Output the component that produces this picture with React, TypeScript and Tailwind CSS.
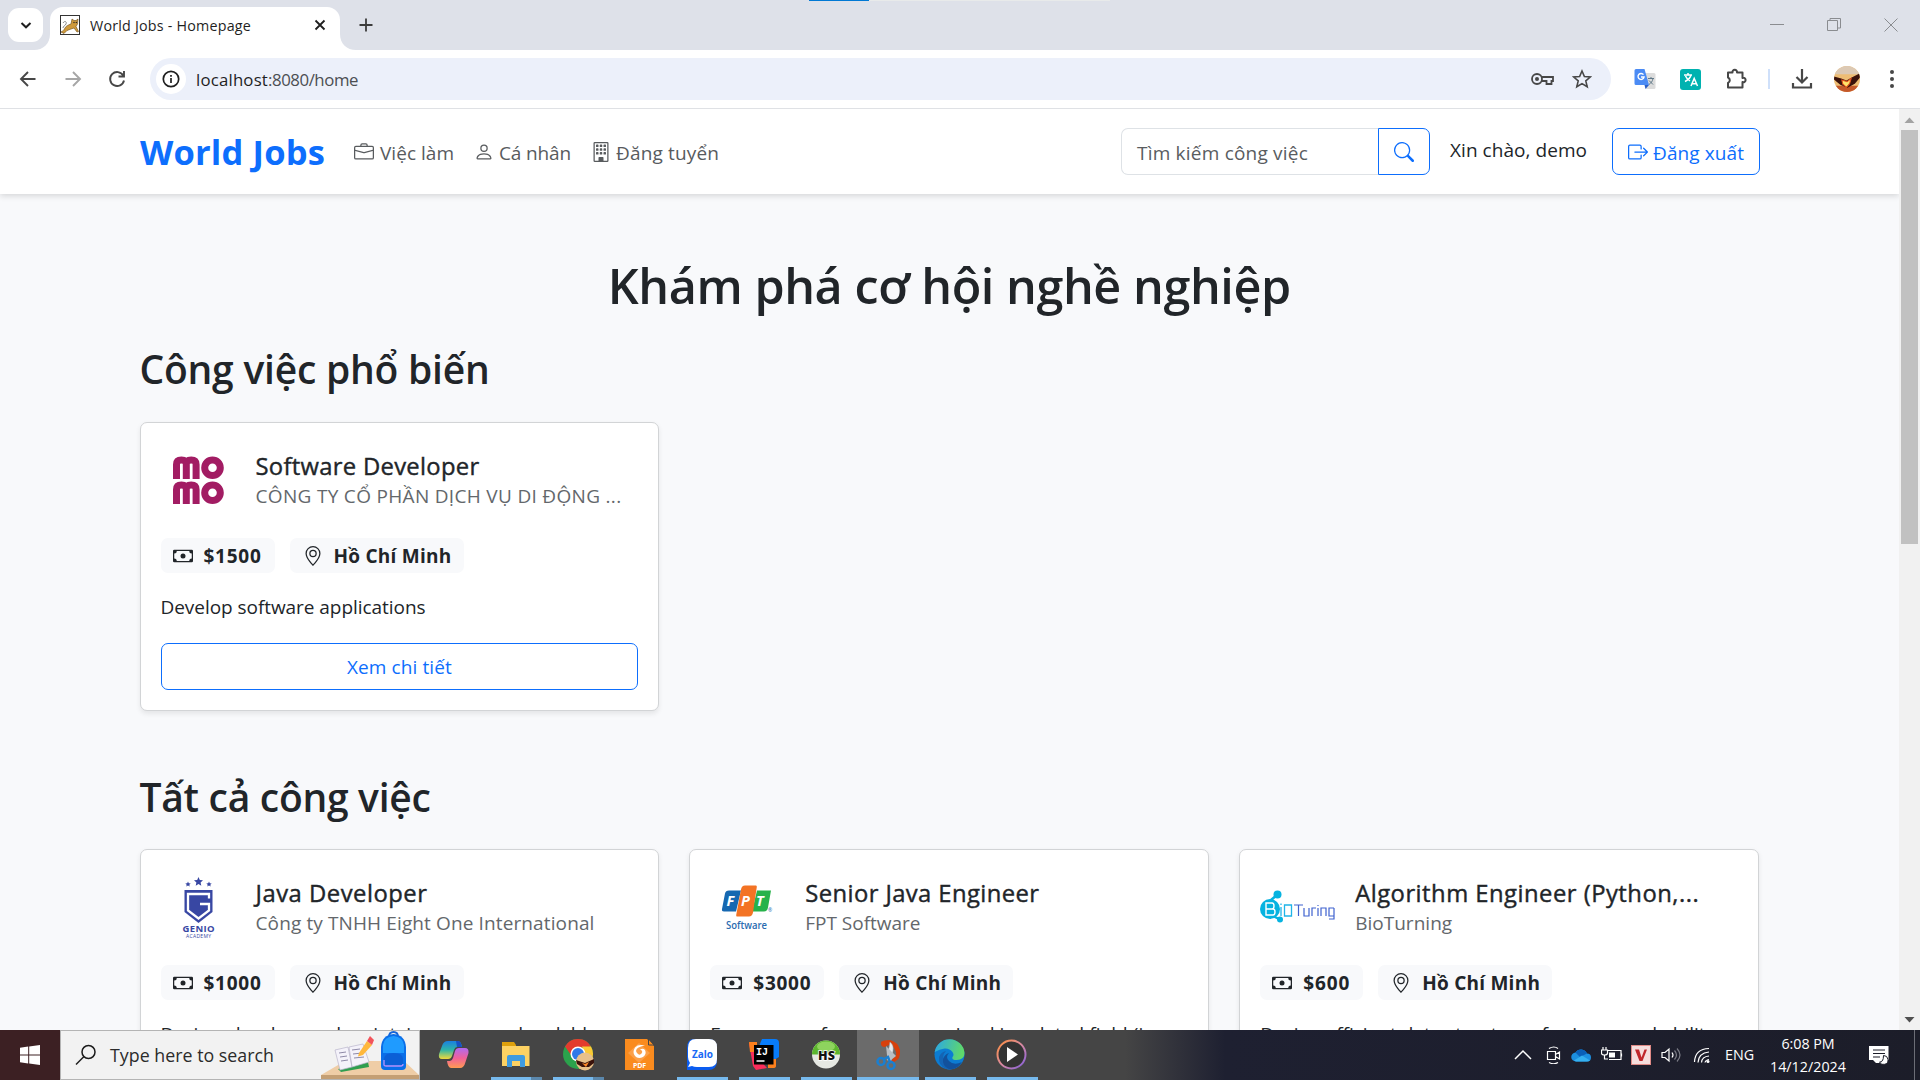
import { useLayoutEffect, useRef } from "react";
import type { ReactNode } from "react";
import { BsBriefcase, BsPerson, BsBuilding, BsSearch, BsBoxArrowRight, BsCash, BsGeoAlt } from "react-icons/bs";

/* Single line of text whose tracking is adjusted so that it spans `w` pixels. */
function Line({ w, className = "", children }: { w: number; className?: string; children: string }) {
  const ref = useRef<HTMLSpanElement>(null);
  useLayoutEffect(() => {
    const el = ref.current;
    if (!el) return;
    el.style.letterSpacing = "0px";
    const natural = el.getBoundingClientRect().width;
    el.style.letterSpacing = `${(w - natural) / children.length}px`;
  }, [w, children]);
  return (
    <span ref={ref} className={`inline-block whitespace-nowrap ${className}`}>
      {children}
    </span>
  );
}

function Svg({ size = 20, box = 20, children, className = "" }: { size?: number; box?: number; children: ReactNode; className?: string }) {
  return (
    <svg width={size} height={size} viewBox={`0 0 ${box} ${box}`} fill="none" className={`shrink-0 ${className}`}>
      {children}
    </svg>
  );
}

function Favicon() {
  return (
    <Svg size={20} className="text-[#333]">
      <rect x=".5" y=".5" width="19" height="19" fill="#fff" stroke="#333" />
      <path d="M1 17c2-1 3-2 4-4 1-2 3-3 6-4l1-5 2 1.500h2L18 4l-.5 5-1.500 2.500 2.500 5-1.500.5-3-4-3 1-4 1.500-3 3z" fill="#cf9a3c" stroke="#6b4a15" strokeWidth=".6" />
      <path d="M3 8c2-3 4-1 3 1s-3 2-3 4" stroke="#888" />
      <circle cx="14" cy="7.500" r=".7" fill="#222" />
      <circle cx="16.300" cy="7.500" r=".7" fill="#222" />
    </Svg>
  );
}

function TabStrip() {
  return (
    <div className="relative flex h-[50px] shrink-0 bg-[#dee1e9]">
      <div className="absolute left-[809px] top-0 h-px w-[60px] bg-[#0078d4]" />
      <div className="absolute left-[869px] top-0 h-px w-[241px] bg-[#e8eaea]" />
      <div className="ml-2 mt-2 flex h-[34px] w-[35px] items-center justify-center rounded-[11px] bg-white">
        <Svg size={12} box={12}>
          <path d="M1.500 4 6 8.300 10.500 4" stroke="#1f1f1f" strokeWidth="2" />
        </Svg>
      </div>
      <div className="w-[7px] self-end h-4 overflow-visible">
        <Svg size={16} box={16} className="-ml-[9px] max-w-none">
          <path d="M16 0v16H0C9 16 16 10 16 0z" fill="#fff" />
        </Svg>
      </div>
      <div className="mt-[7px] flex h-[43px] w-[290px] items-center rounded-t-[13px] bg-white pb-[7px] pl-[10px] pr-[13px]">
        <Favicon />
        <Line w={161} className="ml-[10px] mt-px text-[14.300px] leading-5 text-[#1f1f1f]">World Jobs - Homepage</Line>
        <Svg size={14} box={14} className="ml-auto">
          <path d="m2.500 2.500 9 9m0-9-9 9" stroke="#1f1f1f" strokeWidth="1.800" />
        </Svg>
      </div>
      <div className="flex h-4 w-[16px] self-end">
        <Svg size={16} box={16}>
          <path d="M0 0v16h16C7 16 0 10 0 0z" fill="#fff" />
        </Svg>
      </div>
      <Svg size={14} box={14} className="ml-[3px] mt-[18px]">
        <path d="M7 .5v13M.5 7h13" stroke="#3c3c3c" strokeWidth="1.800" />
      </Svg>
      <div className="ml-auto mr-[22px] flex h-[50px] items-center gap-[43px] text-[#8a8c90]">
        <Svg size={14} box={14}>
          <path d="M0 6.500h14" stroke="currentColor" />
        </Svg>
        <Svg size={14} box={14}>
          <path d="M.5 2.500h10v10H.5zM3 2V.5h10.500V10H11" stroke="currentColor" />
        </Svg>
        <Svg size={14} box={14}>
          <path d="m.5.5 13 13m0-13-13 13" stroke="currentColor" />
        </Svg>
      </div>
    </div>
  );
}

function Toolbar() {
  return (
    <div className="flex h-[59px] shrink-0 items-center border-b border-[#dfe1e5] bg-white text-[#474747]">
      <Svg size={20} className="ml-[18px]">
        <path d="M17.500 10H3.500m6.500-7-7 7 7 7" stroke="currentColor" strokeWidth="1.900" />
      </Svg>
      <Svg size={20} className="ml-[25px] text-[#a6a6a6]">
        <path d="M2.500 10h14M10 3l7 7-7 7" stroke="currentColor" strokeWidth="1.900" />
      </Svg>
      <Svg size={20} className="ml-[24px]">
        <path d="M16.200 6.500A7 7 0 1 0 17 11.500M17 2v5.500h-5.500" stroke="currentColor" strokeWidth="1.900" />
      </Svg>
      <div className="ml-[23px] flex h-[42px] w-[1461px] items-center rounded-full bg-[#ecf0fa] pl-[6px] pr-[19px]">
        <div className="flex size-[30px] items-center justify-center rounded-full bg-white">
          <Svg size={18} box={18}>
            <circle cx="9" cy="9" r="7.700" stroke="#1f1f1f" strokeWidth="1.700" />
            <path d="M9 8v5M9 5v1.800" stroke="#1f1f1f" strokeWidth="1.700" />
          </Svg>
        </div>
        <div className="ml-[10px] flex pt-[2px] text-[16.800px] leading-6">
          <Line w={72} className="text-[#1f1f1f]">localhost</Line>
          <Line w={90} className="text-[#4b4e52]">:8080/home</Line>
        </div>
        <Svg size={24} box={24} className="ml-auto">
          <circle cx="7" cy="12" r="5" stroke="currentColor" strokeWidth="1.800" />
          <circle cx="7" cy="12" r="2" fill="currentColor" />
          <path d="M11.500 10H23v4h-1.500v3h-5v-3h-5" stroke="currentColor" strokeWidth="1.800" />
        </Svg>
        <Svg size={20} className="ml-[18px]">
          <path d="m10 2 2.400 5.500 5.900.5-4.500 3.900 1.400 5.900-5.200-3.200-5.200 3.200 1.400-5.900L1.700 8l5.900-.5z" stroke="currentColor" strokeWidth="1.600" />
        </Svg>
      </div>
      <Svg size={22} box={22} className="ml-[23px]">
        <path d="M8 5h12a1.500 1.500 0 0 1 1.500 1.500v13A1.500 1.500 0 0 1 20 21h-8z" fill="#dcdcdc" />
        <path d="M14 10.500h6M17 9v1.500m2 0c-.5 3-2 4.500-4 6m0-4 4 4" stroke="#607988" />
        <path d="M2 1h8.500l4.500 16H2A1.500 1.500 0 0 1 .5 15.500v-13A1.500 1.500 0 0 1 2 1z" fill="#4b8bf4" />
        <path d="m11.500 21 3.500-4h-4.500z" fill="#2b5fc7" />
        <path d="M9.500 6.700A3 3 0 1 0 10 9H7" stroke="#fff" strokeWidth="1.400" />
      </Svg>
      <div className="ml-[24px] size-[21px] rounded-[3px] bg-[#00b2b0]">
        <Svg size={21} box={21}>
          <path d="M4 6h8M8 4v2m3 0c-.7 3-3 5-6 6.500M5.500 7c1 2.500 3 4 4.500 5M11 17l3.200-7.500L17.500 17M12 14.700h4.500" stroke="#fff" strokeWidth="1.500" />
        </Svg>
      </div>
      <Svg size={24} box={24} className="ml-[23px]">
        <path d="M4 5.500h4.500a2.300 2.300 0 1 1 4.500 0h5.500V11a2.200 2.200 0 1 1 0 4v5.500H4V16a3 3 0 0 0 0-5.500z" stroke="currentColor" strokeWidth="2" strokeLinejoin="round" />
      </Svg>
      <div className="ml-[20px] h-5 w-[2px] bg-[#cfe0fa]" />
      <Svg size={22} box={22} className="ml-[21px]">
        <path d="M11 1v13M5.500 9l5.500 5.500L16.500 9M2 15v4.500h18V15" stroke="currentColor" strokeWidth="2.200" />
      </Svg>
      <div className="ml-[21px] size-[26px] overflow-hidden rounded-full">
        <Svg size={26} box={25}>
          <path d="M0 0h25v25H0z" fill="#eebd74" />
          <path d="M0 0h25v8H0z" fill="#dcc9b4" />
          <path d="M0 19h25v6H0z" fill="#c4582a" />
          <path d="m0 10 7 2 5 2 5-3 8-4v4l-5 6-7 4-7-3-6-5z" fill="#3a120b" />
          <path d="m7.500 13.500 5 1.500 4-3-1.500 5-3 3.500-3.500-3z" fill="#ffe36b" stroke="#e2521d" />
        </Svg>
      </div>
      <Svg size={20} className="ml-[22px]">
        <circle cx="10" cy="3" r="2" fill="currentColor" />
        <circle cx="10" cy="10" r="2" fill="currentColor" />
        <circle cx="10" cy="17" r="2" fill="currentColor" />
      </Svg>
    </div>
  );
}

function NavBar() {
  return (
    <header className="z-10 flex h-[85px] shrink-0 items-center bg-white pl-[140px] pr-[139px] shadow-[0_2px_6px_rgba(0,0,0,0.14)]">
      <Line w={185} className="text-[34.500px] font-bold leading-[52px] text-[#0d6efd]">World Jobs</Line>
      <nav className="ml-[29px] flex items-center text-[19px] leading-[30px] text-[#585b5e]">
        <BsBriefcase size={20} />
        <Line w={74} className="ml-[6px] mt-[3px]">Việc làm</Line>
        <BsPerson size={20} className="ml-[20px]" />
        <Line w={72} className="ml-[5px] mt-[3px]">Cá nhân</Line>
        <BsBuilding size={20} className="ml-[20px]" />
        <Line w={103} className="ml-[5px] mt-[3px]">Đăng tuyển</Line>
      </nav>
      <div className="ml-auto flex h-[47px] text-[19px] leading-[30px]">
        <div className="flex w-[257px] items-center rounded-l-[7px] border border-r-0 border-[#dee2e6] pl-[15px] pt-[2px] text-[#595c5f]">
          <Line w={171}>Tìm kiếm công việc</Line>
        </div>
        <div className="flex w-[52px] items-center justify-center rounded-r-[7px] border border-[#0d6efd] text-[#0d6efd]">
          <BsSearch size={20} />
        </div>
        <Line w={137} className="ml-5 mt-[7px] text-[#212529]">Xin chào, demo</Line>
        <div className="ml-[25px] flex w-[148px] items-center rounded-[7px] border border-[#0d6efd] pl-[15px] text-[#0d6efd]">
          <BsBoxArrowRight size={20} />
          <Line w={91} className="ml-[5px] mt-[2px]">Đăng xuất</Line>
        </div>
      </div>
    </header>
  );
}

function MomoLogo() {
  return (
    <Svg size={75} box={75}>
      {[0, 25].map((y) => (
        <g key={y} transform={`translate(0 ${y})`} stroke="#a21c63" strokeWidth="7">
          <path d="M15.500 36V21.500q0-4.500 4.900-4.500t4.900 4.500V36M25.300 21.500q0-4.500 4.900-4.500t4.900 4.500V36" />
          <circle cx="51.500" cy="24.700" r="7.800" />
        </g>
      ))}
    </Svg>
  );
}

function GenioLogo() {
  return (
    <Svg size={75} box={75}>
      <g transform="translate(0 -6)">
        <path d="m37.500 13 1.300 3 3.200.3-2.400 2.200.7 3.300-2.800-1.700-2.800 1.700.7-3.300-2.400-2.200 3.200-.3zM27 17.500l.8 1.700 1.900.2-1.400 1.300.4 1.900-1.700-1-1.700 1 .4-1.900-1.400-1.300 1.900-.2zM48 17.500l.8 1.700 1.900.2-1.400 1.300.4 1.900-1.700-1-1.700 1 .4-1.900-1.400-1.300 1.900-.2z" fill="#3847a3" />
        <path d="M23.500 26h28v22L37.500 59 23.500 48z" fill="#3847a3" />
        <path d="M48 34.500V30H27V46.500l10.500 8L48 46.500V40H39" stroke="#fff" strokeWidth="2.300" />
        <text x="21.500" y="67.500" textLength="32" fontFamily="Open Sans" fontWeight="700" fontSize="9.500" fill="#3847a3">GENIO</text>
        <text x="25" y="74" textLength="25" fontFamily="Open Sans" fontSize="5" fill="#3847a3">ACADEMY</text>
      </g>
    </Svg>
  );
}

function FptLogo() {
  return (
    <Svg size={75} box={75}>
      <g transform="translate(0 -3.500)">
        <path d="M19 24h12l-5 21H14q-2.500 0-2-2.500L15 27q.6-3 4-3z" fill="#1668b1" />
        <path d="M47 24h14l-3 17q-.7 4-4 4H42z" fill="#27b24a" />
        <path d="M35 19h11q1 0 .8 1.500L43 46q-.8 4-4 4H27q-1 0-.8-1.500L31 23q.7-4 4-4z" fill="#f37324" />
        <g fontFamily="Open Sans" fontWeight="700" fontStyle="italic" fontSize="14.500" fill="#fff">
          <text x="16.500" y="39.500">F</text>
          <text x="31" y="39.500">P</text>
          <text x="46" y="39.500">T</text>
        </g>
        <text x="58" y="45" fontFamily="Open Sans" fontSize="5" fill="#1668b1">®</text>
        <text x="16" y="62" textLength="41" lengthAdjust="spacingAndGlyphs" fontFamily="Open Sans" fontWeight="600" fontSize="10" fill="#2a6cb0">Software</text>
      </g>
    </Svg>
  );
}

function BioLogo() {
  return (
    <Svg size={75} box={75}>
      <path d="m11 30 6-5M11 45l8 4" stroke="#06b3e0" strokeWidth="2.500" />
      <circle cx="10" cy="39" r="10" fill="#06b3e0" />
      <circle cx="17.500" cy="24.500" r="4" fill="#06b3e0" />
      <circle cx="20" cy="49.500" r="3" fill="#06b3e0" />
      <path d="M6 33h6q2 0 2 3t-2 3H6zM6 39h7q2 0 2 3t-2 3H6z" stroke="#fff" strokeWidth="1.400" />
      <g transform="translate(0 1)">
        <path d="M21 36v9M21 32.500v1.500M24.500 34h7v11h-7z" stroke="#1fb4e8" strokeWidth="1.300" />
        <path d="M34 34h9m-4.500 0v11M44 37v8h5v-8m3 8v-8h4m2 0v8m0-11v1M61 45v-8h5v8m8-8h-5v8h5m0-8v11h-5" stroke="#3f62cf" strokeWidth="1.200" />
      </g>
    </Svg>
  );
}

type Job = {
  title: string;
  titleW: number;
  company: string;
  companyW: number;
  salary: string;
  salaryW: number;
  description: string;
  descriptionW: number;
  logo: ReactNode;
};

const popular: Job = {
  title: "Software Developer",
  titleW: 224,
  company: "CÔNG TY CỔ PHẦN DỊCH VỤ DI ĐỘNG ...",
  companyW: 366,
  salary: "$1500",
  salaryW: 58,
  description: "Develop software applications",
  descriptionW: 265,
  logo: <MomoLogo />,
};

const jobs: Job[] = [
  {
    title: "Java Developer",
    titleW: 172,
    company: "Công ty TNHH Eight One International",
    companyW: 339,
    salary: "$1000",
    salaryW: 58,
    description: "Design, develop, and maintain secure and scalable ...",
    descriptionW: 456,
    logo: <GenioLogo />,
  },
  {
    title: "Senior Java Engineer",
    titleW: 234,
    company: "FPT Software",
    companyW: 115,
    salary: "$3000",
    salaryW: 58,
    description: "Four years of experience gained in related field (i...",
    descriptionW: 448,
    logo: <FptLogo />,
  },
  {
    title: "Algorithm Engineer (Python,...",
    titleW: 344,
    company: "BioTurning",
    companyW: 97,
    salary: "$600",
    salaryW: 47,
    description: "Design efficient data structures for improved ability...",
    descriptionW: 470,
    logo: <BioLogo />,
  },
];

function JobCard({ job }: { job: Job }) {
  return (
    <article className="flex flex-col rounded-[7px] border border-[#d2d4d6] bg-white p-5 text-[19px] leading-[30px] text-[#212529] shadow-[0_2.5px_5px_rgba(0,0,0,0.08)]">
      <div className="flex h-[75px] items-center">
        {job.logo}
        <div className="ml-5 flex flex-col items-start pt-px">
          <Line w={job.titleW} className="text-[23.800px] [-webkit-text-stroke:0.4px]">{job.title}</Line>
          <Line w={job.companyW} className="text-[#63676b]">{job.company}</Line>
        </div>
      </div>
      <div className="mt-5 flex h-[35px] gap-[15px] font-bold">
        <div className="flex items-center rounded-[7px] bg-[#f8f9fb] pl-3 pr-[13px]">
          <BsCash size={20} className="mr-[11px]" />
          <Line w={job.salaryW}>{job.salary}</Line>
        </div>
        <div className="flex items-center rounded-[7px] bg-[#f8f9fb] pl-[13px] pr-3">
          <BsGeoAlt size={20} className="mr-[11px]" />
          <Line w={118}>Hồ Chí Minh</Line>
        </div>
      </div>
      <div className="mt-[19px]">
        <Line w={job.descriptionW}>{job.description}</Line>
      </div>
      <div className="mt-[21px] flex h-[47px] items-center justify-center rounded-[7px] border border-[#0d6efd] text-[#0d6efd]">
        <Line w={105}>Xem chi tiết</Line>
      </div>
    </article>
  );
}

function Scrollbar() {
  return (
    <div className="flex w-[21px] shrink-0 flex-col items-center bg-[#f1f1f1]">
      <Svg size={21} box={21}>
        <path d="m10.500 8.500 5 5.500h-10z" fill="#a3a3a3" />
      </Svg>
      <div className="h-[414px] w-[17px] bg-[#c1c1c1]" />
      <Svg size={21} box={21} className="mt-auto">
        <path d="M5.500 8h10l-5 5.500z" fill="#505050" />
      </Svg>
    </div>
  );
}

function SearchArt() {
  return (
    <svg width="98" height="48" viewBox="0 0 98 48" className="shrink-0 self-end">
      <path d="M0 44 24 30h59l15 14z" fill="#efcda6" />
      <path d="M0 44h98v4H0z" fill="#c49f74" />
      <path d="m17 38 3 3 28-5-1-5z" fill="#2f9e4f" />
      <path d="m14 19 13-3 4 20-12 3zM28 16l14-3 6 18-17 5z" fill="#f4f2fa" stroke="#b9b4cc" strokeWidth=".7" />
      <path d="m18 22 7-1m-6 5 7-1m-6 5 7-1M31 19l8-1m-7 5 9-1m-8 5 10-1" stroke="#8f8aa8" />
      <path d="m38 22 8-12 5 4-9 10-5 1.500z" fill="#ffb83d" />
      <path d="m46 10 3-5 4 4-2 5z" fill="#f2545b" />
      <path d="M68 6q0-5 4.500-5T77 6" fill="none" stroke="#1565d8" strokeWidth="2" />
      <path d="M60 16Q61 4 72.500 3 84 4 85 16v19q0 4-4 4H64q-4 0-4-4z" fill="#0a6ee8" />
      <path d="M62 14q1-8 10.500-9Q82 6 83 14v8H62z" fill="#1f9bff" />
      <path d="M63 28q0-6 9.500-6t9.500 6v8H63z" fill="#0b5fd6" />
      <path d="M63 29v5q0 1 2 1h15q2 0 2-2" fill="none" stroke="#b794ff" strokeWidth="1.300" />
    </svg>
  );
}

function TaskIcon({ children, bar = "none" }: { children: ReactNode; bar?: "none" | "one" | "stack" | "active" }) {
  return (
    <div className={`flex h-full w-[62px] shrink-0 flex-col items-center ${bar === "active" ? "bg-[#6b6b6b]" : ""}`}>
      <div className="flex h-[47px] items-center pt-[3px]">
        <Svg size={32} box={32}>{children}</Svg>
      </div>
      {bar === "one" && <div className="h-[3px] w-[51px] bg-[#76b9ed]" />}
      {bar === "active" && <div className="h-[3px] w-full bg-[#76b9ed]" />}
      {bar === "stack" && (
        <div className="flex h-[3px] w-[51px]">
          <div className="w-[40px] bg-[#76b9ed]" />
          <div className="w-[11px] bg-[#5b87ab]" />
        </div>
      )}
    </div>
  );
}

function Taskbar() {
  return (
    <footer className="flex h-[50px] shrink-0 bg-[linear-gradient(90deg,#454545_0,#454545_1125px,#1e2031_1225px,#1c1d29_100%)] text-white">
      <div className="flex w-[60px] items-center justify-center bg-[#3c2023]">
        <Svg size={20}>
          <path d="M0 2.700 8.200 1.600v7.900H0zM9.200 1.400 20 0v9.500H9.200zM0 10.500h8.200v7.900L0 17.300zM9.200 10.500H20V20L9.200 18.600z" fill="#fff" />
        </Svg>
      </div>
      <div className="flex w-[360px] items-center border border-[#b4b4b4] bg-[#f2f2f2] pl-[14px]">
        <Svg size={22} box={22}>
          <circle cx="13.500" cy="8" r="6.500" stroke="#1b1b1b" strokeWidth="1.500" />
          <path d="m9 12.500-8 8" stroke="#1b1b1b" strokeWidth="1.500" />
        </Svg>
        <Line w={164} className="ml-[13px] text-[17.800px] leading-6 text-[#2b2b2b]">Type here to search</Line>
        <div className="ml-auto h-[48px]">
          <SearchArt />
        </div>
      </div>
      <div className="flex pl-[3px]">
        <TaskIcon>
          <defs>
            <linearGradient id="cpA" x1="0" y1="0" x2="0" y2="1">
              <stop offset="0" stopColor="#1a7fe0" />
              <stop offset=".5" stopColor="#2fb5a6" />
              <stop offset="1" stopColor="#f0d93b" />
            </linearGradient>
            <linearGradient id="cpB" x1="0" y1="0" x2="0" y2="1">
              <stop offset="0" stopColor="#b06af0" />
              <stop offset=".5" stopColor="#f0619a" />
              <stop offset="1" stopColor="#ff9a52" />
            </linearGradient>
          </defs>
          <path d="M10 2h10q3 0 4 6h-5q-2 0-3 3l-2 6q-1 3-4 3H4q-4 0-3-5l3-8q1.500-5 6-5z" fill="url(#cpA)" />
          <path d="M22 29H13q-3 0-4-7h3q2 0 3-3l2-7q1-3 4-3h6q4 0 3.500 5l-3 9q-1.500 6-5.500 6z" fill="url(#cpB)" />
          <path d="M18 2h2q3 0 4 6h-5z" fill="#1750c4" />
        </TaskIcon>
        <TaskIcon bar="stack">
          <path d="M2 3h12l2 3v4H2z" fill="#dea00c" />
          <path d="M2 7h27.500v20H2z" fill="#fdd263" />
          <path d="M7 28V18q0-2 2-2h14q2 0 2 2v10h-5v-6h-8v6z" fill="#3f9be0" />
        </TaskIcon>
        <TaskIcon bar="stack">
          <circle cx="16" cy="15" r="15" fill="#2ba24c" />
          <path d="M3 7.500A15 15 0 0 1 29 7.500L16 9 9 16z" fill="#e33b2e" />
          <path d="M29 7.500A15 15 0 0 1 17 30l6-12-3-10.500z" fill="#fcc934" />
          <circle cx="16" cy="15" r="7.500" fill="#fff" />
          <circle cx="16" cy="15" r="6" fill="#3079e8" />
          <circle cx="23" cy="22.500" r="9" fill="#e8c08a" />
          <path d="m14 21 9 3 9-4v4l-5 4h-7l-5-3z" fill="#3a120b" />
          <path d="m20 24 3 1 4-2-3 5z" fill="#ff8a2a" />
        </TaskIcon>
        <TaskIcon>
          <path d="M1 0h22l7 7v24H1z" fill="#fa8b1e" />
          <path d="m24.500 0 5.500 6h-5.500z" fill="#fa8b1e" stroke="#454545" />
          <path d="m4 14 11-10 11 10-11 10z" fill="#fba04a" />
          <path d="M21 6.500q-7-1.500-10 2-3 5 0 8.500t8 1q4-3 2-7-2-2-5-.5 3.500 1.500 1.500 4t-4.500-.5 1.500-5.500q3-1.500 6.500-2z" fill="#fff" />
          <text x="9" y="29" textLength="13" fontFamily="Open Sans" fontWeight="700" fontSize="7" fill="#fff">PDF</text>
        </TaskIcon>
        <TaskIcon bar="one">
          <path d="M8 0h14q9 0 9 9v13q0 9-9 9H1V9q0-9 7-9z" fill="#0a5cf0" />
          <path d="M10 0h13q8 0 8 8v12q0 8-8 8H11q-3 0-5-1l-4 1 2-4q-2-3-2-6V9q0-9 8-9z" fill="#fff" />
          <text x="6" y="19" textLength="21" lengthAdjust="spacingAndGlyphs" fontFamily="Open Sans" fontWeight="700" fontSize="10" fill="#1769f5">Zalo</text>
        </TaskIcon>
        <TaskIcon bar="one">
          <path d="M1 4h8v14l10 11-11 2L5 27z" fill="#fb2d5b" />
          <path d="M1 3h8v10H2z" fill="#fc801d" />
          <path d="M14 0h13q4 0 4 4v14l-5 3L11 7z" fill="#087cfa" />
          <path d="M20 20h8v7q0 2-3 2h-5z" fill="#fc801d" />
          <path d="M6 6h19.500v19.500H6z" fill="#000" />
          <text x="8" y="15.500" fontFamily="Liberation Mono" fontWeight="700" fontSize="10" fill="#fff">IJ</text>
          <path d="M8.500 22h8" stroke="#fff" strokeWidth="1.500" />
        </TaskIcon>
        <TaskIcon bar="one">
          <circle cx="16" cy="15.500" r="14" fill="#e6e8e3" />
          <path d="M2 15.500a14 14 0 0 1 28 0z" fill="#5db52e" />
          <ellipse cx="16" cy="7.500" rx="9" ry="5" fill="#8ed35e" />
          <text x="8" y="20.500" textLength="17" fontFamily="Open Sans" fontWeight="800" fontSize="12.500" fill="#111" stroke="#fff" strokeWidth="1.500" paintOrder="stroke">HS</text>
        </TaskIcon>
        <TaskIcon bar="active">
          <path d="M9 3q2-2 9-2 8 2 10 10 1 9-6 12h-3l2-4q4-1 3-6-2-6-6-7-3 0-5 2-5 0-4-5z" fill="#d8400c" />
          <path d="M18 3q4 3 3 9l-2 10-4-1z" fill="#e8ebee" stroke="#9aa0a6" strokeWidth=".5" />
          <path d="m14 7 10 10-5 4-4-5z" fill="#b9bec3" />
          <circle cx="9" cy="22.500" r="3.500" stroke="#1b7fd0" strokeWidth="2.500" />
          <circle cx="19" cy="26.500" r="3.500" stroke="#1b7fd0" strokeWidth="2.500" />
          <path d="m12 20 4-2 2 5" stroke="#1b7fd0" strokeWidth="2.500" />
        </TaskIcon>
        <TaskIcon bar="one">
          <defs>
            <linearGradient id="edA" x1="0" y1="0" x2="1" y2=".2">
              <stop offset="0" stopColor="#2aa6e8" />
              <stop offset="1" stopColor="#5fd86b" />
            </linearGradient>
          </defs>
          <circle cx="15.500" cy="15.500" r="15" fill="#0c7cd2" />
          <path d="M.7 13A15 15 0 0 1 30.500 14q0 7-8 7-5 0-4-3 2-2 0-5-3-4-8-3.500T.7 13z" fill="url(#edA)" />
          <path d="M12 12q-5 5-1 12 5 7 15 2-7 6-14 4-8-4-7-12 2-5 7-6z" fill="#1464b4" />
          <path d="M15 14q-4 4 0 8 5 5 13 1-5 8-13 7-7-3-6-10 2-5 6-6z" fill="#12519c" />
        </TaskIcon>
        <TaskIcon bar="one">
          <defs>
            <linearGradient id="mpA" x1="0" y1="0" x2="1" y2="1">
              <stop offset="0" stopColor="#ff8f3c" />
              <stop offset=".5" stopColor="#d98aa0" />
              <stop offset="1" stopColor="#7d5be0" />
            </linearGradient>
          </defs>
          <circle cx="15.500" cy="15.500" r="14" fill="#333" stroke="url(#mpA)" strokeWidth="2" />
          <path d="m11 8 11 7.500L11 23z" fill="#fff" />
        </TaskIcon>
      </div>
      <div className="ml-auto flex items-center">
        <Svg size={18} box={18}>
          <path d="m1 13 8-8 8 8" stroke="#fff" strokeWidth="1.500" />
        </Svg>
        <Svg size={18} box={18} className="ml-[13px]">
          <path d="M2.500 5.500h8v8h-8zM10.500 8.500l4-2.500v7l-4-2.500M4 2.500q5-3 9 0M4 16.500q5 2.500 9 0" stroke="#fff" strokeWidth="1.200" />
        </Svg>
        <Svg size={20} className="ml-[8px]">
          <path d="M5 16.500a4.500 4.500 0 0 1-.5-9A6.500 6.500 0 0 1 16 8.500a4 4 0 0 1 0 8z" fill="#1c8fe0" />
          <path d="M4.500 7.500A6.500 6.500 0 0 1 16 8.500L9 12z" fill="#0a5fb8" />
          <path d="m3 15.500 8-5 8 5q-1 1-3 1H5z" fill="#35b0f0" />
        </Svg>
        <Svg size={22} box={22} className="ml-[10px]">
          <path d="M6 6.500h14v9H8M20.500 9.500v3M2 3v3m3-3v3M.500 6h6v3q0 2-3 2t-3-2zM3.500 11v4H7" stroke="#fff" strokeWidth="1.200" />
          <path d="M8 8.500h6v5H8z" fill="#fff" />
        </Svg>
        <div className="ml-[8px] flex size-5 items-center justify-center border border-[#e08a86] bg-[#f6dedd]">
          <Svg size={18} box={18}>
            <path d="M3 3.500h4l2.500 8 3-8H15L10.500 15h-3z" fill="#c0272b" />
          </Svg>
        </div>
        <Svg size={20} className="ml-[10px]">
          <path d="M1 7.500h3L8 4v12l-4-3.500H1z" stroke="#fff" strokeWidth="1.200" />
          <path d="M11 7.500q2 2.500 0 5" stroke="#fff" strokeWidth="1.200" />
          <path d="M13.500 5.500q4 4.500 0 9M16 3.500q6 6.500 0 13" stroke="#7b7c86" strokeWidth="1.200" />
        </Svg>
        <Svg size={18} box={18} className="ml-[12px]">
          <path d="M1.500 16Q2 3 16 2.500M5 16.500Q5.500 7 16 6M8.500 16.500q.5-6 7.500-6.500M12 16.500q.5-2.500 4-3" stroke="#fff" strokeWidth="1.200" />
          <circle cx="15" cy="15.500" r="1.500" fill="#fff" />
        </Svg>
        <Line w={29} className="ml-[14px] text-[14.300px] leading-5">ENG</Line>
        <div className="ml-[15px] flex w-[78px] flex-col items-center text-[14.300px] leading-[23px]">
          <Line w={53}>6:08 PM</Line>
          <Line w={76}>14/12/2024</Line>
        </div>
        <Svg size={22} box={22} className="ml-[21px]">
          <path d="M1 2h19.500v14H14l-1 3H8l-3-3H1z" fill="#fff" />
          <path d="M5 6h12M5 9.500h12M5 13h7" stroke="#1c1d29" strokeWidth="1.200" />
          <path d="M15.500 11.500a4.500 4.500 0 1 1-4 6.500q4 .5 4-6.500z" fill="#fff" stroke="#1c1d29" />
        </Svg>
        <div className="ml-[24px] mr-[5px] h-[50px] w-px bg-[#6c6d76]" />
      </div>
    </footer>
  );
}

export default function App() {
  return (
    <div className="flex h-[1080px] w-[1920px] flex-col overflow-hidden bg-[#f8f9fb] font-['Open_Sans','Noto_Sans',sans-serif]">
      <TabStrip />
      <Toolbar />
      <div className="flex min-h-0 flex-1">
        <div className="flex min-w-0 flex-1 flex-col overflow-hidden">
          <NavBar />
          <main className="flex min-h-0 flex-1 flex-col pl-[139.5px] pr-[140px] pt-[61px] text-[#212529]">
            <h1 className="flex justify-center text-[48.500px] font-semibold leading-[60px]">
              <Line w={683}>Khám phá cơ hội nghề nghiệp</Line>
            </h1>
            <h2 className="mt-[30px] text-[39px] font-semibold leading-[48px]">
              <Line w={350}>Công việc phổ biến</Line>
            </h2>
            <div className="mt-[29px] grid shrink-0 grid-cols-3 gap-[30px]">
              <JobCard job={popular} />
            </div>
            <h2 className="mt-[62px] text-[39px] font-semibold leading-[48px]">
              <Line w={291}>Tất cả công việc</Line>
            </h2>
            <div className="mt-[28px] grid shrink-0 grid-cols-3 gap-[30px]">
              {jobs.map((job) => (
                <JobCard key={job.title} job={job} />
              ))}
            </div>
          </main>
        </div>
        <Scrollbar />
      </div>
      <Taskbar />
    </div>
  );
}
